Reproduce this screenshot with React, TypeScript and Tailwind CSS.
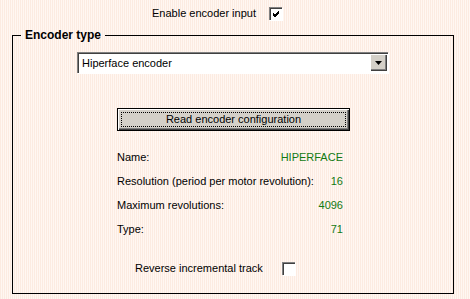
import { FC } from "react";

const CheckBox: FC<{ checked?: boolean }> = ({ checked }) => (
  <div className="relative w-[13px] h-[13px] bg-white border-t border-l border-[#808080] shadow-[inset_1px_1px_0_#404040,1px_1px_0_#ffffff]">
    {checked && (
      <svg className="absolute left-[1px] top-[1px]" width="10" height="10" viewBox="0 0 10 10">
        <path d="M2 4 L4 6 L8 2 M2 5 L4 7 L8 3 M2 6 L4 8 L8 4" stroke="#000" strokeWidth="1" fill="none" shapeRendering="crispEdges" />
      </svg>
    )}
  </div>
);

const InfoRow: FC<{ label: string; value: string }> = ({ label, value }) => (
  <div className="flex justify-between h-[24px] items-center whitespace-nowrap">
    <span>{label}</span>
    <span className="text-[#127a12]">{value}</span>
  </div>
);

const App: FC = () => {
  return (
    <div className="w-[470px] h-[299px] overflow-hidden text-[11px] text-black font-['Liberation_Sans',Arial,sans-serif] bg-[repeating-linear-gradient(90deg,#fcebe1_0px,#fcebe1_1px,#fff7f2_1px,#fff7f2_2px)]">
      {/* Top checkbox row */}
      <div className="flex items-center h-[26px] pl-[152px] pt-[1px]">
        <span>Enable encoder input</span>
        <div className="ml-[13px]">
          <CheckBox checked />
        </div>
      </div>

      {/* Encoder type group */}
      <fieldset className="ml-[12px] w-[442px] h-[268px] border border-black px-0 pb-0 pt-[8px]">
        <legend className="ml-[8px] px-[4px] text-[12px] font-bold leading-[18px]">Encoder type</legend>

        {/* Dropdown */}
        <div className="ml-[64px] w-[311px] h-[21px] flex bg-white border-t border-l border-[#808080] shadow-[inset_1px_1px_0_#404040,1px_1px_0_#ffffff] pl-[4px] pr-[2px] py-[2px]">
          <span className="flex-1 leading-[15px] pt-[1px]">Hiperface encoder</span>
          <div className="w-[16px] h-[16px] -mt-[1px] flex items-center justify-center bg-[#d4d0c8] border-t border-l border-white shadow-[inset_-1px_-1px_0_#808080,1px_1px_0_#404040]">
            <svg width="7" height="4" viewBox="0 0 7 4">
              <path d="M0 0 H7 L3.5 4 Z" fill="#000" />
            </svg>
          </div>
        </div>

        {/* Read button */}
        <div className="ml-[104px] mt-[35px] w-[233px] h-[23px] border border-black bg-[#d4d0c8] shadow-[inset_1px_1px_0_#ffffff,inset_-1px_-1px_0_#404040,inset_-2px_-2px_0_#808080] p-[3px]">
          <div className="h-full border border-dotted border-black flex items-center justify-center">
            Read encoder configuration
          </div>
        </div>

        {/* Encoder info */}
        <div className="ml-[104px] mt-[14px] w-[226px]">
          <InfoRow label="Name:" value="HIPERFACE" />
          <InfoRow label="Resolution (period per motor revolution):" value="16" />
          <InfoRow label="Maximum revolutions:" value="4096" />
          <InfoRow label="Type:" value="71" />
        </div>

        {/* Reverse checkbox */}
        <div className="flex items-center ml-[122px] mt-[19px]">
          <span>Reverse incremental track</span>
          <div className="ml-[19px]">
            <CheckBox />
          </div>
        </div>
      </fieldset>
    </div>
  );
};

export default App;
